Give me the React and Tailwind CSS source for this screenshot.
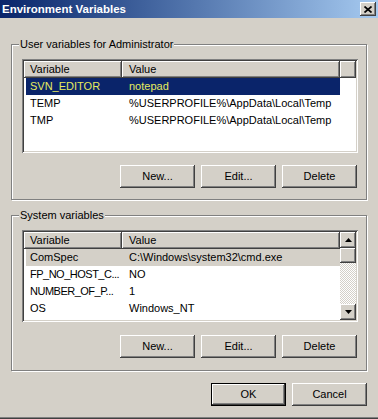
import React from "react";

const raised =
  "bg-[#d4d0c8] shadow-[inset_-1px_-1px_0_#404040,inset_1px_1px_0_#ffffff,inset_-2px_-2px_0_#808080]";

function Btn({ children, def }) {
  if (def) {
    return (
      <div className="w-[75px] h-[23px] border border-black">
        <div className={"w-full h-full flex items-center justify-center " + raised}>
          <span>{children}</span>
        </div>
      </div>
    );
  }
  return (
    <div className={"w-[75px] h-[23px] flex items-center justify-center " + raised}>
      <span>{children}</span>
    </div>
  );
}

function GroupBox({ label, children, className }) {
  return (
    <div
      className={
        "relative mx-[11px] w-[356px] border border-[#808080] shadow-[inset_1px_1px_0_#ffffff,1px_1px_0_#ffffff] " +
        className
      }
    >
      <div className="absolute left-[7px] top-[-8px] h-[14px] leading-[14px] px-[1px] bg-[#d4d0c8]">
        {label}
      </div>
      {children}
    </div>
  );
}

function Row({ name, value, selected, focused, tight }) {
  let bg = "";
  let color = "text-black";
  if (selected) {
    bg = "bg-[#0a246a]";
    color = "text-[#e6eb5f]";
  } else if (focused) {
    bg = "bg-[#d4d0c8]";
  }
  return (
    <div className="h-[17px] shrink-0 pl-[2px] flex">
      <div className={"w-[314px] h-full flex items-center whitespace-nowrap " + bg + " " + color}>
        <div className={"w-[96px] pl-[4px] overflow-hidden " + (tight ? "tracking-[-0.5px]" : "")}>{name}</div>
        <div className="pl-[7px]">{value}</div>
      </div>
    </div>
  );
}

function Header({ filler }) {
  return (
    <div className="h-[17px] shrink-0 flex">
      <div className={"w-[98px] h-full flex items-center pl-[6px] " + raised}>Variable</div>
      <div className={"w-[218px] h-full flex items-center pl-[7px] " + raised}>Value</div>
      {filler && <div className={"flex-1 h-full " + raised}></div>}
    </div>
  );
}

function Arrow({ up }) {
  return (
    <div className={"w-[16px] h-[16px] shrink-0 flex items-center justify-center " + raised}>
      <svg width="7" height="4" viewBox="0 0 7 4">
        {up ? (
          <polygon points="3.5,0 7,4 0,4" fill="#000" />
        ) : (
          <polygon points="0,0 7,0 3.5,4" fill="#000" />
        )}
      </svg>
    </div>
  );
}

function ListView({ height, rows, scrollbar }) {
  return (
    <div
      className={
        "w-[336px] ml-[10px] p-[2px] bg-white shadow-[inset_1px_1px_0_#808080,inset_-1px_-1px_0_#ffffff,inset_2px_2px_0_#404040,inset_-2px_-2px_0_#d4d0c8] " +
        height
      }
    >
      <div className="w-full h-full flex overflow-hidden">
        <div className="flex-1 flex flex-col overflow-hidden">
          <Header filler={!scrollbar} />
          {rows.map((r, i) => (
            <Row key={i} {...r} />
          ))}
        </div>
        {scrollbar && (
          <div className="w-[16px] h-full flex flex-col bg-[repeating-conic-gradient(#ffffff_0%_25%,#d4d0c8_0%_50%)] bg-[length:2px_2px]">
            <Arrow up />
            <div className={"w-[16px] h-[15px] shrink-0 " + raised}></div>
            <div className="flex-1"></div>
            <Arrow />
          </div>
        )}
      </div>
    </div>
  );
}

export default function App() {
  return (
    <div className="w-[378px] h-[419px] overflow-hidden bg-[#d4d0c8] flex flex-col text-[11px] leading-[13px] text-black font-['Liberation_Sans',Arial,sans-serif]">
      <div className="h-[18px] shrink-0 flex items-center justify-between bg-gradient-to-r from-[#0a246a] to-[#a6caf0]">
        <span className="pl-[2px] text-white font-bold text-[11.5px]">Environment Variables</span>
        <div className={"w-[16px] h-[14px] mr-[2px] flex items-center justify-center " + raised}>
          <svg width="8" height="7" viewBox="0 0 8 7">
            <path d="M0.5 0.5 L7.5 6.5 M7.5 0.5 L0.5 6.5" stroke="#000" strokeWidth="1.7" />
          </svg>
        </div>
      </div>

      <GroupBox label="User variables for Administrator" className="mt-[26px] pt-[14px] pb-[11px]">
        <ListView
          height="h-[94px]"
          rows={[
            { name: "SVN_EDITOR", value: "notepad", selected: true },
            { name: "TEMP", value: "%USERPROFILE%\\AppData\\Local\\Temp" },
            { name: "TMP", value: "%USERPROFILE%\\AppData\\Local\\Temp" },
          ]}
        />
        <div className="mt-[12px] mr-[9px] flex justify-end gap-[6px]">
          <Btn>New...</Btn>
          <Btn>Edit...</Btn>
          <Btn>Delete</Btn>
        </div>
      </GroupBox>

      <GroupBox label="System variables" className="mt-[15px] pt-[14px] pb-[12px]">
        <ListView
          height="h-[92px]"
          scrollbar
          rows={[
            { name: "ComSpec", value: "C:\\Windows\\system32\\cmd.exe", focused: true },
            { name: "FP_NO_HOST_C...", value: "NO", tight: true },
            { name: "NUMBER_OF_P...", value: "1", tight: true },
            { name: "OS", value: "Windows_NT" },
            { name: "Path", value: "C:\\Windows\\system32;C:\\Windows;C:\\Wi..." },
          ]}
        />
        <div className="mt-[13px] mr-[9px] flex justify-end gap-[6px]">
          <Btn>New...</Btn>
          <Btn>Edit...</Btn>
          <Btn>Delete</Btn>
        </div>
      </GroupBox>

      <div className="mt-[12px] w-[367px] flex justify-end gap-[6px]">
        <Btn def>OK</Btn>
        <Btn>Cancel</Btn>
      </div>

      <div className="flex-1"></div>
      <div className="h-[2px] shrink-0 border-t border-b border-t-[#808080] border-b-[#404040]"></div>
    </div>
  );
}
